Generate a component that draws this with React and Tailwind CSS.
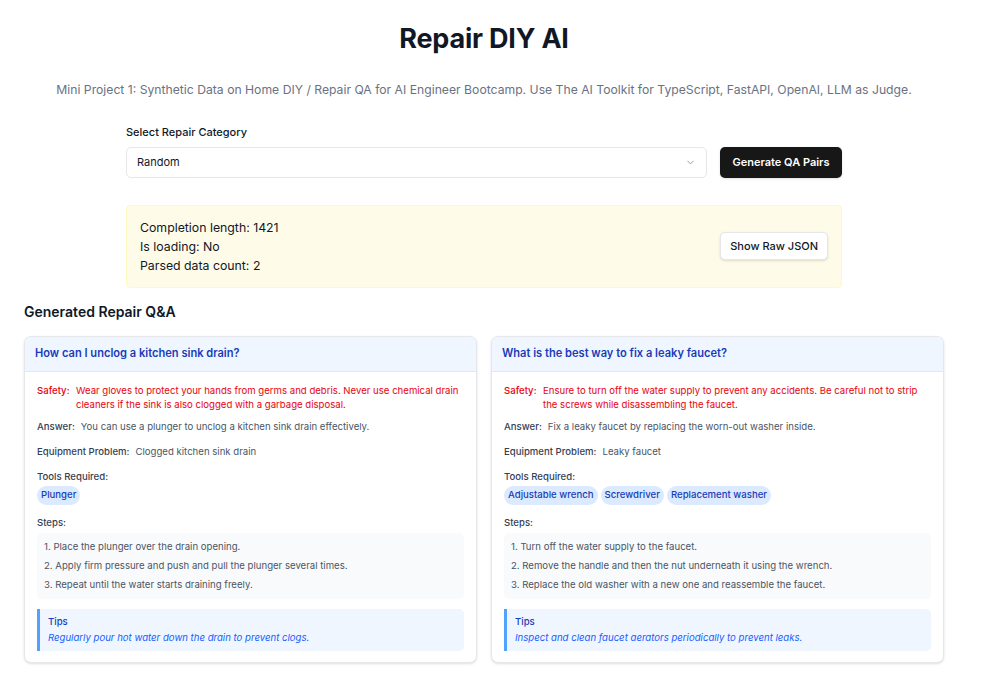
import React from 'react'
import { ChevronDown } from 'lucide-react'

const items = [
  {
    question: 'How can I unclog a kitchen sink drain?',
    safety: 'Wear gloves to protect your hands from germs and debris. Never use chemical drain cleaners if the sink is also clogged with a garbage disposal.',
    answer: 'You can use a plunger to unclog a kitchen sink drain effectively.',
    problem: 'Clogged kitchen sink drain',
    tools: ['Plunger'],
    steps: [
      'Place the plunger over the drain opening.',
      'Apply firm pressure and push and pull the plunger several times.',
      'Repeat until the water starts draining freely.',
    ],
    tips: 'Regularly pour hot water down the drain to prevent clogs.',
  },
  {
    question: 'What is the best way to fix a leaky faucet?',
    safety: 'Ensure to turn off the water supply to prevent any accidents. Be careful not to strip the screws while disassembling the faucet.',
    answer: 'Fix a leaky faucet by replacing the worn-out washer inside.',
    problem: 'Leaky faucet',
    tools: ['Adjustable wrench', 'Screwdriver', 'Replacement washer'],
    steps: [
      'Turn off the water supply to the faucet.',
      'Remove the handle and then the nut underneath it using the wrench.',
      'Replace the old washer with a new one and reassemble the faucet.',
    ],
    tips: 'Inspect and clean faucet aerators periodically to prevent leaks.',
  },
]

const QACard = ({ item }) => (
  <div className="bg-white rounded-[7px] border border-gray-200 shadow-sm overflow-hidden">
    <div className="bg-blue-50 border-b border-gray-200 px-[10px] h-[35px] flex items-center">
      <h3 className="text-[11.1px] font-semibold text-blue-800">{item.question}</h3>
    </div>
    <div className="px-[12px] pt-[12px] pb-[11px] text-[9.6px] leading-[14px]">
      <div className="flex text-red-600">
        <span className="font-medium shrink-0 w-[39px]">Safety:</span>
        <span>{item.safety}</span>
      </div>
      <div className="flex mt-[8px]">
        <span className="font-medium text-gray-700 shrink-0 mr-[6px]">Answer:</span>
        <span className="text-gray-600">{item.answer}</span>
      </div>
      <div className="flex mt-[11px]">
        <span className="font-medium text-gray-700 shrink-0 mr-[6px]">Equipment Problem:</span>
        <span className="text-gray-600">{item.problem}</span>
      </div>
      <div className="mt-[11px] font-medium text-gray-700">Tools Required:</div>
      <div className="flex flex-wrap gap-[3px] mt-[2px]">
        {item.tools.map(t => (
          <span key={t} className="bg-blue-100 text-blue-800 font-medium rounded-full px-[4px] h-[19px] flex items-center">{t}</span>
        ))}
      </div>
      <div className="mt-[11px] font-medium text-gray-700">Steps:</div>
      <ol className="mt-[3px] bg-gray-50 rounded-[5px] px-[7px] py-[7px] space-y-[5px] text-gray-600">
        {item.steps.map((s, i) => (
          <li key={i}>{i + 1}. {s}</li>
        ))}
      </ol>
      <div className="mt-[10px] bg-blue-50 border-l-[3px] border-blue-400 rounded-r-[5px] px-[8px] py-[6px]">
        <div className="font-medium text-blue-800">Tips</div>
        <div className="italic text-blue-600 mt-[2px]">{item.tips}</div>
      </div>
    </div>
  </div>
)

export default function App() {
  return (
    <div className="min-h-screen bg-white text-gray-900 font-['Inter',sans-serif]">
      <div className="w-[920px] ml-6 pt-[22px] pb-6">
        <h1 className="text-[27px] font-bold text-center leading-[34px] tracking-[-0.2px]">Repair DIY AI</h1>
        <p className="text-center text-gray-500 text-[12.2px] mt-[25px]">
          Mini Project 1: Synthetic Data on Home DIY / Repair QA for AI Engineer Bootcamp. Use The AI Toolkit for TypeScript, FastAPI, OpenAI, LLM as Judge.
        </p>

        <div className="w-[716px] mx-auto mt-[25px]">
          <label className="block text-[11px] font-medium text-gray-900">Select Repair Category</label>
          <div className="flex gap-[13px] mt-[6px]">
            <div className="flex-1 h-[31px] border border-gray-200 rounded-[5px] flex items-center justify-between px-[10px] text-[11px] text-gray-900">
              <span>Random</span>
              <ChevronDown className="w-[11px] h-[11px] text-gray-500" strokeWidth={1.5} />
            </div>
            <button className="w-[122px] h-[31px] bg-neutral-900 text-white text-[11px] font-semibold rounded-[5px] shadow-sm">
              Generate QA Pairs
            </button>
          </div>

          <div className="mt-[27px] bg-yellow-50 border border-yellow-100 rounded-[4px] h-[83px] flex items-center justify-between pl-[13px] pr-[13px]">
            <div className="text-[12.3px] leading-[19px] text-gray-900">
              <div>Completion length: 1421</div>
              <div>Is loading: No</div>
              <div>Parsed data count: 2</div>
            </div>
            <button className="bg-white border border-gray-200 rounded-[5px] h-[28px] px-[9px] text-[11px] font-medium shadow-sm">
              Show Raw JSON
            </button>
          </div>
        </div>

        <h2 className="text-[14px] font-semibold mt-[14px] leading-[20px]">Generated Repair Q&amp;A</h2>
        <div className="grid grid-cols-2 gap-[14px] mt-[14px] items-start">
          {items.map(it => (
            <QACard key={it.question} item={it} />
          ))}
        </div>
      </div>
    </div>
  )
}
